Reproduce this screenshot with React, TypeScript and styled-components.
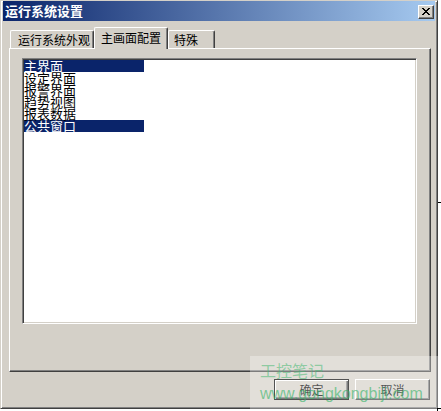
import React from "react";
import styled, { createGlobalStyle } from "styled-components";

const Global = createGlobalStyle`
  html, body { margin: 0; padding: 0; background: #ffffff; overflow: hidden; }
  #root { width: 441px; height: 411px; position: relative; }
`;

const CJK = `"Noto Sans CJK SC", "Noto Sans", sans-serif`;

const Window = styled.div`
  box-sizing: border-box;
  width: 438px;
  height: 409px;
  background: #d4d0c8;
  border: 1px solid;
  border-color: #d4d0c8 #404040 #404040 #d4d0c8;
  box-shadow: inset 1px 1px #ffffff, inset -1px -1px #808080;
  padding: 0 2px 2px 2px;
  display: flex;
  flex-direction: column;
  font-family: ${CJK};
`;

const TitleBar = styled.div`
  height: 20px;
  display: flex;
  align-items: center;
  justify-content: space-between;
  padding: 0 1px 0 2px;
  background: linear-gradient(to right, #0a246a, #a6caf0);
`;

const TitleText = styled.span`
  color: #ffffff;
  font-weight: bold;
  font-size: 13px;
  line-height: 14px;
  white-space: nowrap;
`;

const CloseButton = styled.div`
  box-sizing: border-box;
  width: 16px;
  height: 14px;
  background: #d4d0c8;
  border: 1px solid;
  border-color: #ffffff #404040 #404040 #ffffff;
  box-shadow: inset -1px -1px #808080;
  display: flex;
  align-items: center;
  justify-content: center;
  margin-top: 1px;
`;

const Body = styled.div`
  display: flex;
  flex-direction: column;
  padding: 6px 4px 0 6px;
`;

const TabStrip = styled.div`
  height: 21px;
  display: flex;
  align-items: flex-end;
  padding-left: 1px;
`;

const Tab = styled.div<{ $w: number; $pad: number; $active?: boolean }>`
  box-sizing: border-box;
  width: ${(p) => p.$w}px;
  height: ${(p) => (p.$active ? 22 : 18)}px;
  margin-bottom: ${(p) => (p.$active ? -1 : 0)}px;
  padding-left: ${(p) => p.$pad}px;
  padding-bottom: ${(p) => (p.$active ? 2 : 0)}px;
  position: relative;
  z-index: ${(p) => (p.$active ? 2 : 1)};
  background: #d4d0c8;
  border-top: 1px solid #ffffff;
  border-left: 1px solid #ffffff;
  border-right: 1px solid #404040;
  box-shadow: inset -1px 0 #808080;
  border-radius: 2px 2px 0 0;
  display: flex;
  align-items: center;
  font-size: 12px;
  line-height: 12px;
  color: #000000;
  white-space: nowrap;
`;

const Panel = styled.div`
  box-sizing: border-box;
  height: 324px;
  border: 1px solid;
  border-color: #ffffff #404040 #404040 #ffffff;
  box-shadow: inset -1px -1px #808080;
  padding: 9px 0 0 12px;
`;

const ListBox = styled.div`
  box-sizing: border-box;
  width: 395px;
  height: 266px;
  background: #ffffff;
  border: 1px solid;
  border-color: #808080 #ffffff #ffffff #808080;
  box-shadow: inset 1px 1px #404040, inset -1px -1px #d4d0c8;
  padding: 1px;
  display: flex;
  flex-direction: column;
`;

const ListItem = styled.div<{ $selected?: boolean }>`
  width: 120px;
  height: 12px;
  font-size: 13px;
  line-height: 12px;
  white-space: nowrap;
  overflow: visible;
  color: ${(p) => (p.$selected ? "#ffffff" : "#000000")};
  background: ${(p) => (p.$selected ? "#0a246a" : "transparent")};
  position: relative;
  z-index: ${(p) => (p.$selected ? 0 : 1)};
`;

const ButtonRow = styled.div`
  display: flex;
  justify-content: flex-end;
  gap: 6px;
  margin-top: 7px;
  padding-right: 1px;
`;

const Button = styled.div<{ $default?: boolean }>`
  box-sizing: border-box;
  width: 75px;
  height: 21px;
  background: #d4d0c8;
  border: 1px solid;
  border-color: ${(p) => (p.$default ? "#000000" : "#ffffff #404040 #404040 #ffffff")};
  box-shadow: ${(p) =>
    p.$default
      ? "inset 1px 1px #ffffff, inset -1px -1px #404040, inset -2px -2px #808080"
      : "inset -1px -1px #808080"};
  display: flex;
  align-items: center;
  justify-content: center;
  font-size: 12px;
  color: #000000;
`;

const Watermark = styled.div`
  position: absolute;
  left: 250px;
  top: 356px;
  width: 191px;
  height: 55px;
  background: rgba(255, 255, 255, 0.32);
  padding: 6px 0 0 10px;
  box-sizing: border-box;
  pointer-events: none;
`;

const MarkCN = styled.div`
  font-family: ${CJK};
  font-size: 16px;
  line-height: 16px;
  color: rgba(70, 185, 115, 0.55);
  white-space: nowrap;
`;

const MarkURL = styled.div`
  font-family: "Liberation Sans", Arial, sans-serif;
  font-size: 16px;
  line-height: 16px;
  margin-top: 8px;
  color: rgba(55, 180, 105, 0.62);
  white-space: nowrap;
`;

const Handle = styled.div<{ $x: number; $y: number; $w: number; $h: number }>`
  position: absolute;
  left: ${(p) => p.$x}px;
  top: ${(p) => p.$y}px;
  width: ${(p) => p.$w}px;
  height: ${(p) => p.$h}px;
  background: #000000;
`;

const items: { label: string; selected?: boolean }[] = [
  { label: "主界面", selected: true },
  { label: "设定界面" },
  { label: "报警界面" },
  { label: "趋势视图" },
  { label: "报表数据" },
  { label: "公共窗口", selected: true },
];

export default function App() {
  return (
    <>
      <Global />
      <Window>
        <TitleBar>
          <TitleText>运行系统设置</TitleText>
          <CloseButton>
            <svg width="8" height="7" viewBox="0 0 8 7">
              <path d="M0 0h2v1h1v1h2V1h1V0h2v1H7v1H6v1H5v1h1v1h1v1h1v1H6V6H5V5H3v1H2v1H0V6h1V5h1V4h1V3H2V2H1V1H0z" fill="#000" />
            </svg>
          </CloseButton>
        </TitleBar>
        <Body>
          <TabStrip>
            <Tab $w={84} $pad={7}>运行系统外观</Tab>
            <Tab $w={74} $pad={6} $active>主画面配置</Tab>
            <Tab $w={47} $pad={5}>特殊</Tab>
          </TabStrip>
          <Panel>
            <ListBox>
              {items.map((it) => (
                <ListItem key={it.label} $selected={it.selected}>
                  {it.label}
                </ListItem>
              ))}
            </ListBox>
          </Panel>
          <ButtonRow>
            <Button $default>确定</Button>
            <Button>取消</Button>
          </ButtonRow>
        </Body>
      </Window>
      <Watermark>
        <MarkCN>工控笔记</MarkCN>
        <MarkURL>www.gongkongbiji.com</MarkURL>
      </Watermark>
      <Handle $x={438} $y={202} $w={3} $h={1} />
      <Handle $x={437} $y={409} $w={1} $h={2} />
      <Handle $x={437} $y={408} $w={4} $h={1} />
    </>
  );
}
